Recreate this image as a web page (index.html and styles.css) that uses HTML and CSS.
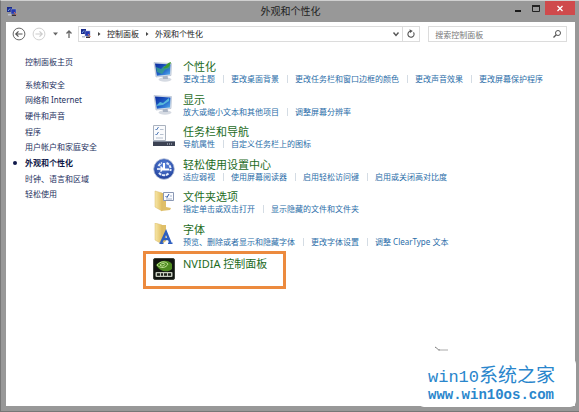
FILE: index.html
```html
<!DOCTYPE html>
<html lang="zh-CN">
<head>
<meta charset="utf-8">
<title>外观和个性化</title>
<link rel="stylesheet" href="styles.css">
</head>
<body>
<svg class="defs" width="0" height="0" aria-hidden="true">
  <defs>
    <linearGradient id="screen" x1="0" y1="0" x2="1" y2="1">
      <stop offset="0" stop-color="#0c2a9c"/><stop offset=".55" stop-color="#1f5fc8"/><stop offset="1" stop-color="#58b4ee"/>
    </linearGradient>
    <linearGradient id="folder" x1="0" y1="0" x2="1" y2="0">
      <stop offset="0" stop-color="#f7e7a8"/><stop offset="1" stop-color="#e2bf62"/>
    </linearGradient>
    <radialGradient id="ball" cx=".5" cy=".35" r=".7">
      <stop offset="0" stop-color="#5c86dc"/><stop offset="1" stop-color="#1b3a96"/>
    </radialGradient>
    <symbol id="panel" viewBox="0 0 10 10">
      <rect x="0" y="0" width="5" height="5" fill="#1a2a8c"/>
      <path d="M1 4L3 1.500" stroke="#7fb0ee" fill="none"/>
      <rect x="4" y="2" width="5" height="5" fill="#2438b0" stroke="#9aa6c8" stroke-width=".5"/>
      <path d="M1 7h3v1.500H1z" fill="#b8bfd0"/>
      <path d="M5 7.500h4v1.500H5z" fill="#3a3038"/>
      <path d="M7 5l2.500 3" stroke="#d8744a" fill="none"/>
    </symbol>
    <symbol id="monitor" viewBox="0 0 22 22">
      <ellipse cx="12" cy="19.500" rx="6.500" ry="2.200" fill="#d5dae2"/>
      <path d="M9.500 15.500l5-.8.500 4.300h-5z" fill="#aab4c4"/>
      <path d="M1 2.500L18.500 3.500 18 15.500 3 17z" fill="#d9e2ee" stroke="#a9b6c8" stroke-width=".6"/>
      <path d="M2 3.500L17.500 4.500 17 14.500 3.800 15.700z" fill="url(#screen)"/>
    </symbol>
  </defs>
</svg>
<div class="window">
  <header class="titlebar">
    <svg class="app-icon" viewBox="0 0 10 10" aria-hidden="true"><use href="#panel"/></svg>
    <h1 class="caption">外观和个性化</h1>
    <div class="controls">
      <button class="control" aria-label="最小化"><svg viewBox="0 0 10 10"><path d="M2 8h6" stroke="#1a1a1a" stroke-width="2"/></svg></button>
      <button class="control" aria-label="最大化"><svg viewBox="0 0 10 10"><path d="M1.500 3v5.500h7V3" fill="none" stroke="#222"/><path d="M1 3h8" stroke="#222" stroke-width="2"/></svg></button>
      <button class="control close" aria-label="关闭"><svg viewBox="0 0 10 10"><path d="M2.500 3l5 5M7.500 3l-5 5" stroke="#fff" stroke-width="1.300"/></svg></button>
    </div>
  </header>
  <div class="client">
    <nav class="toolbar" aria-label="导航">
      <button class="nav" aria-label="后退"><svg viewBox="0 0 14 14"><circle cx="7" cy="7" r="5.900" fill="#fff" stroke="#686868"/><path d="M10.500 7H4M6.500 4.300L3.800 7l2.700 2.700" fill="none" stroke="#555" stroke-width="1.200"/></svg></button>
      <button class="nav" aria-label="前进"><svg viewBox="0 0 14 14"><circle cx="7" cy="7" r="5.900" fill="#fff" stroke="#d2d2d2"/><path d="M3.500 7H10M7.500 4.300L10.200 7l-2.700 2.700" fill="none" stroke="#ccc" stroke-width="1.200"/></svg></button>
      <button class="nav recent" aria-label="最近位置"><svg viewBox="0 0 8 14"><path d="M1 5.500h5L3.500 8.500z" fill="#666"/></svg></button>
      <button class="nav up" aria-label="上移"><svg viewBox="0 0 14 14"><path d="M7 11V4M4.500 6.500L7 4l2.500 2.500" fill="none" stroke="#666" stroke-width="1.300"/></svg></button>
      <div class="address">
        <svg class="app-icon" viewBox="0 0 10 10" aria-hidden="true"><use href="#panel"/></svg>
        <svg class="chevron" viewBox="0 0 4 6" aria-hidden="true"><path d="M1 1l2.500 2L1 5z" fill="#444"/></svg>
        <a class="crumb" href="#">控制面板</a>
        <svg class="chevron" viewBox="0 0 4 6" aria-hidden="true"><path d="M1 1l2.500 2L1 5z" fill="#444"/></svg>
        <a class="crumb" href="#">外观和个性化</a>
        <button class="address-button history" aria-label="历史记录"><svg viewBox="0 0 10 10"><path d="M2.500 3.500L5 6.500l2.500-3" fill="none" stroke="#555" stroke-width="1.400"/></svg></button>
        <button class="address-button refresh" aria-label="刷新"><svg viewBox="0 0 10 10"><path d="M7.500 3.300A3.100 3.100 0 1 1 4 2.200" fill="none" stroke="#555" stroke-width="1.100"/><path d="M3.500.3L6.800 2 4 4z" fill="#555"/></svg></button>
      </div>
      <div class="search">
        <input class="search-input" type="search" placeholder="搜索控制面板" aria-label="搜索控制面板">
        <svg class="search-icon" viewBox="0 0 10 10" aria-hidden="true"><circle cx="6" cy="4" r="2.500" fill="none" stroke="#555"/><path d="M4.200 5.800L1.500 8.500" stroke="#555" stroke-width="1.300"/></svg>
      </div>
    </nav>
    <div class="body">
      <aside class="sidebar">
        <a class="home" href="#">控制面板主页</a>
        <ul class="categories">
          <li><a href="#">系统和安全</a></li>
          <li><a href="#">网络和 Internet</a></li>
          <li><a href="#">硬件和声音</a></li>
          <li><a href="#">程序</a></li>
          <li><a href="#">用户帐户和家庭安全</a></li>
          <li class="current"><a href="#" aria-current="page">外观和个性化</a></li>
          <li><a href="#">时钟、语言和区域</a></li>
          <li><a href="#">轻松使用</a></li>
        </ul>
      </aside>
      <main class="main">
        <div class="items">
          <section class="item">
            <svg class="icon" viewBox="0 0 22 22" aria-hidden="true"><use href="#monitor"/><path d="M3 7l5 2 3-3 6-1v3l-5 2-3 4-5-2z" fill="#37a08c" opacity=".8"/><path d="M10 8c3-1 3-5 8-6-1 4-3 7-8 6z" fill="#3f9a31"/></svg>
            <div><h2><a href="#">个性化</a></h2>
            <ul class="tasks"><li><a href="#">更改主题</a></li><li><a href="#">更改桌面背景</a></li><li><a href="#">更改任务栏和窗口边框的颜色</a></li><li><a href="#">更改声音效果</a></li><li><a href="#">更改屏幕保护程序</a></li></ul></div>
          </section>
          <section class="item">
            <svg class="icon" viewBox="0 0 22 22" aria-hidden="true"><use href="#monitor"/><path d="M3 13l4-4 3 1 6-5v3l-6 4z" fill="#62c7dd" opacity=".85"/></svg>
            <div><h2><a href="#">显示</a></h2>
            <ul class="tasks"><li><a href="#">放大或缩小文本和其他项目</a></li><li><a href="#">调整屏幕分辨率</a></li></ul></div>
          </section>
          <section class="item">
            <svg class="icon" viewBox="0 0 22 22" aria-hidden="true"><path d="M.5.500h12v15H.500z" fill="#fafbfd" stroke="#aab2be"/><path d="M2.500 4l1 1 2-3M2.500 9l1 1 2-3" fill="none" stroke="#4d77b5"/><path d="M7 4.500h3.500M7 9.500h3.500M3 13h7" stroke="#b7c1cf"/><path d="M0 16h22v5H0z" fill="#3c4253"/><path d="M0 16h22v1H0z" fill="#80899a"/><path d="M14 19h1m1 0h1m1 0h1" stroke="#c6cede"/></svg>
            <div><h2><a href="#">任务栏和导航</a></h2>
            <ul class="tasks"><li><a href="#">导航属性</a></li><li><a href="#">自定义任务栏上的图标</a></li></ul></div>
          </section>
          <section class="item">
            <svg class="icon" viewBox="0 0 22 22" aria-hidden="true"><circle cx="11" cy="11" r="10.300" fill="url(#ball)" stroke="#aebbd6" stroke-width=".8"/><path d="M5.500 8A6.500 6.500 0 0 1 9 5M13.500 5a6.500 6.500 0 0 1 3.800 8M15.500 15.500a6.500 6.500 0 0 1-9.500-.7" fill="none" stroke="#e6eefc" stroke-width="2" stroke-dasharray="3 .7"/><path d="M11 5v6.500h5" fill="none" stroke="#fff" stroke-width="2"/><path d="M4 11h6l-2.500-2.500M10 11l-2.500 2.500" fill="none" stroke="#fff" stroke-width="1.500"/></svg>
            <div><h2><a href="#">轻松使用设置中心</a></h2>
            <ul class="tasks"><li><a href="#">适应弱视</a></li><li><a href="#">使用屏幕阅读器</a></li><li><a href="#">启用轻松访问键</a></li><li><a href="#">启用或关闭高对比度</a></li></ul></div>
          </section>
          <section class="item">
            <svg class="icon" viewBox="0 0 22 22" aria-hidden="true"><path d="M7 3h6v14l5 1-1 2-9 1z" fill="#dfbf69"/><path d="M2 1l7 2v18l-7-4z" fill="url(#folder)" stroke="#d8ba66" stroke-width=".5"/><path d="M10.500 2.500h10v8h-10z" fill="#fbfcff" stroke="#8b98b4"/><path d="M12.500 6l1.500 1.500L16 4" fill="none" stroke="#2e56a2"/><path d="M17 6h2M13 9h6" stroke="#a7b4cb"/></svg>
            <div><h2><a href="#">文件夹选项</a></h2>
            <ul class="tasks"><li><a href="#">指定单击或双击打开</a></li><li><a href="#">显示隐藏的文件和文件夹</a></li></ul></div>
          </section>
          <section class="item">
            <svg class="icon" viewBox="0 0 22 22" aria-hidden="true"><path d="M7 2h6v16l-4 3z" fill="#dfbf69"/><path d="M2 0l7 2v19l-7-4z" fill="url(#folder)" stroke="#d8ba66" stroke-width=".5"/><path d="M8 20l5-11 4.500 11M10 16h6" fill="none" stroke="#2e5fc0" stroke-width="2.400"/><path d="M6.500 20.300h4m4.500 0h4.500" stroke="#2e5fc0" stroke-width="1.400"/></svg>
            <div><h2><a href="#">字体</a></h2>
            <ul class="tasks"><li><a href="#">预览、删除或者显示和隐藏字体</a></li><li><a href="#">更改字体设置</a></li><li><a href="#">调整 ClearType 文本</a></li></ul></div>
          </section>
        </div>
        <section class="item highlighted">
          <svg class="icon" viewBox="0 0 22 22" aria-hidden="true"><rect x=".5" y=".5" width="21" height="21" rx="1.500" fill="#101410" stroke="#3b4039"/><path d="M3 7c4-5 12-6 16-1v5c-4 4-12 3-16-4z" fill="#4e8a20"/><path d="M4 7c4-4 8-4 11-1-2 4-7 5-11 1zM7 7c2-2 4-2 5-.5-1 2-4 2-5 .5z" fill="none" stroke="#c7e69d" stroke-width=".9"/><rect x="2.500" y="14" width="17" height="5" rx="1" fill="#c4cabc"/><path d="M4 16.500h3m1 0h2m1 0h3m1 0h3" stroke="#1c221a" stroke-width="2.500"/></svg>
          <h2><a href="#">NVIDIA 控制面板</a></h2>
        </section>
      </main>
    </div>
  </div>
</div>
<div class="watermark">
  <svg class="mark" viewBox="0 0 16 6" aria-hidden="true"><path d="M1 1c2 1 3 3 5 3" fill="none" stroke="#777"/><path d="M4 4h10" stroke="#aaa"/></svg>
  <div class="plate">
    <p class="site-name"><span class="latin">win10</span>系统之家</p>
    <p class="site-url">www.win10os.com</p>
  </div>
</div>
</body>
</html>
```
FILE: styles.css
```css
* {
  box-sizing: border-box;
}

body {
  margin: 0;
  font: 8px/12px "Noto Sans", "Noto Sans CJK SC", sans-serif;
  color: #222;
}

h1,
h2,
p,
ul {
  margin: 0;
  padding: 0;
  font-weight: 400;
}

ul {
  list-style: none;
}

a {
  color: inherit;
  text-decoration: none;
}

button {
  display: grid;
  place-items: center;
  padding: 0;
  border: 0;
  background: none;
}

svg {
  display: block;
}

.defs {
  position: absolute;
}

.window {
  display: flex;
  flex-direction: column;
  min-height: 100vh;
  padding: 0 4px 5px 5px;
  background: #989898;
  border-top: 1px solid #d0d0d0;
  border-left: 1px solid #777;
  border-bottom: 1px solid #777;
}

.titlebar {
  display: grid;
  grid-template-columns: 1fr auto 1fr;
  align-items: center;
  height: 21px;
}

.app-icon {
  width: 10px;
  height: 10px;
  flex: none;
}

.titlebar .app-icon {
  margin-left: 1px;
}

.caption {
  font-size: 10px;
  line-height: 16px;
  padding-bottom: 2px;
}

.controls {
  display: flex;
  justify-content: flex-end;
  align-self: start;
}

.control {
  width: 18px;
  height: 14px;
}

.control svg {
  width: 10px;
  height: 10px;
}

.close {
  width: 30px;
  background: #cf4a4c;
}

.client {
  flex: 1;
  background: #fff;
}

.toolbar {
  display: flex;
  align-items: center;
  padding: 4px 8px 0 6px;
}

.nav {
  width: 14px;
  margin-right: 6px;
}

.nav svg {
  height: 14px;
}

.nav.recent {
  width: 8px;
  margin-right: 2px;
}

.nav.up {
  margin-right: 2px;
}

.address,
.search {
  display: flex;
  align-items: center;
  height: 16px;
  border: 1px solid #dcdcdc;
}

.address {
  flex: 1;
  margin-right: 8px;
  padding-left: 2px;
}

.chevron {
  width: 4px;
  height: 6px;
  margin: 0 6px;
}

.crumb {
  color: #222;
}

.address-button {
  width: 17px;
  height: 14px;
}

.address-button svg {
  width: 10px;
  height: 10px;
}

.history {
  width: 12px;
  margin-left: auto;
}

.refresh {
  border-left: 1px solid #dcdcdc;
}

.search {
  flex: none;
  width: 25%;
  padding: 0 4px 0 6px;
}

.search-input {
  flex: 1;
  width: 0;
  min-width: 0;
  height: 14px;
  padding: 0;
  border: 0;
  outline: 0;
  background: none;
  font: inherit;
}

.search-input::placeholder {
  color: #777;
}

.search-icon {
  width: 10px;
  height: 10px;
}

.body {
  display: flex;
  padding-top: 14px;
}

.sidebar {
  width: 137px;
  flex: none;
  padding-left: 19px;
  color: #24305e;
}

.home {
  display: block;
}

.categories {
  display: grid;
  grid-auto-rows: 1fr;
  align-items: center;
  min-height: 125px;
  margin-top: 9px;
}

.current {
  position: relative;
  font-weight: 700;
  color: #10194a;
}

.current::before {
  content: "";
  position: absolute;
  top: 4px;
  left: -12px;
  width: 4px;
  height: 4px;
  border-radius: 50%;
  background: #10194a;
}

.main {
  flex: 1;
  min-width: 0;
}

.items {
  display: grid;
  grid-auto-rows: 1fr;
  min-height: 195px;
  padding-left: 10px;
}

.item {
  display: flex;
  gap: 8px;
}

.icon {
  width: 22px;
  height: 22px;
  flex: none;
  margin-top: 4px;
}

.item h2 {
  font-size: 11px;
  line-height: 14px;
  margin-top: 4px;
  color: #1d6b1d;
}

.tasks {
  display: flex;
  line-height: 10px;
  color: #2a6da8;
  white-space: nowrap;
}

.tasks li + li::before {
  content: "";
  display: inline-block;
  width: 1px;
  height: 8px;
  margin: 0 7px 0 8px;
  background: #d4dce4;
  vertical-align: -1px;
}

.highlighted {
  width: 143px;
  height: 38px;
  padding: 0 7px;
  border: 3px solid #ec8a3e;
}

.highlighted h2 {
  margin-top: 3px;
}

.watermark {
  position: absolute;
  right: 3px;
  bottom: 5px;
  width: 158px;
  color: #2a86cc;
}

.mark {
  width: 16px;
  height: 6px;
  margin-left: 16px;
}

.plate {
  margin-top: 6px;
  padding: 6px 0 5px 10px;
  border-radius: 6px;
  background: #fff;
}

.site-name {
  font: 19px/20px "Noto Sans CJK SC", sans-serif;
  white-space: nowrap;
}

.latin {
  font-family: "Liberation Mono", monospace;
  font-size: 17px;
}

.site-url {
  font: 700 14px/14px "Liberation Mono", monospace;
}
```
